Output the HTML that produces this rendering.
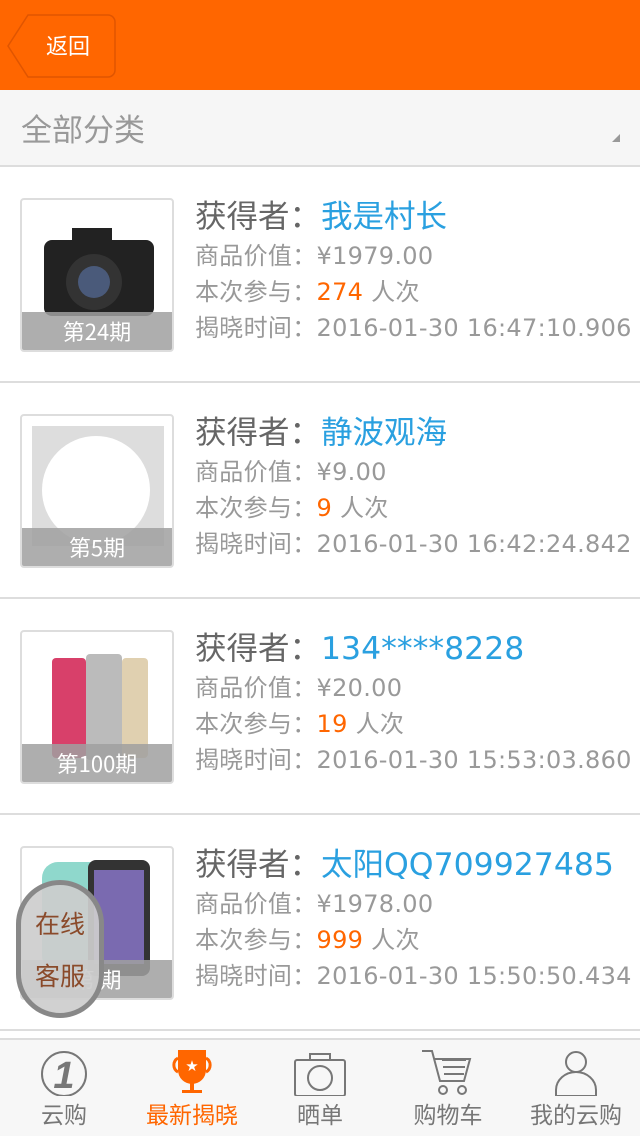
<!DOCTYPE html>
<html><head><meta charset="utf-8"><style>
*{margin:0;padding:0;box-sizing:border-box}
body{width:640px;height:1136px;overflow:hidden;background:#fff;font-family:"DejaVu Sans","Noto Sans CJK SC",sans-serif;position:relative}
.top{position:absolute;left:0;top:0;width:640px;height:90px;background:#ff6600}
.back{position:absolute;left:0;top:0;width:130px;height:90px}
.back span{position:absolute;left:46px;top:30px;color:#fff;font-size:22px;line-height:30px;font-family:"Noto Sans CJK SC",sans-serif}
.cat{position:absolute;top:90px;left:0;width:640px;height:77px;background:#f6f6f6;border-bottom:2px solid #ddd;color:#999;font-size:31px;line-height:76px;padding-left:21px;font-family:"Noto Sans CJK SC",sans-serif}
.cat i{position:absolute;right:20px;top:44px;width:0;height:0;border-left:8px solid transparent;border-bottom:8px solid #999}
.item{position:absolute;left:0;width:640px;height:216px;border-bottom:2px solid #ddd}
.pic{position:absolute;left:20px;top:31px;width:154px;height:154px;border:2px solid #ddd;border-radius:4px;overflow:hidden;background:#fff}
.per{position:absolute;left:0;bottom:0;width:100%;height:38px;background:rgba(160,160,160,.85);color:#fff;font-size:22px;text-align:center;line-height:38px;font-family:"Noto Sans CJK SC",sans-serif}
.t{position:absolute;left:195px;color:#999;font-size:24px;white-space:nowrap;line-height:30px;letter-spacing:0.3px}
.w{font-size:31.5px;color:#666;line-height:40px;letter-spacing:0}
.w b{font-weight:normal;color:#2aa0e0}
.o{color:#ff6600}
.nav{position:absolute;left:0;top:1038px;width:640px;height:98px;background:#f7f7f7;border-top:2px solid #ddd}
.n{position:absolute;top:0;width:128px;text-align:center;font-size:23px;color:#777;font-family:"Noto Sans CJK SC",sans-serif}
.n span{position:absolute;top:56px;left:0;width:100%}
.kf{position:absolute;left:16px;top:880px;width:88px;height:138px;border-radius:44px;background:rgba(205,205,205,.92);border:5px solid #888;color:#8a4a2a;font-size:25px;text-align:center;line-height:52px;padding-top:12px;font-family:"Noto Sans CJK SC",sans-serif}
</style></head><body>
<div class="top"><div class="back"><svg width="130" height="90"><path d="M28 15H108a7 7 0 0 1 7 7V70a7 7 0 0 1-7 7H28L8 46z" fill="#ff6600" stroke="#e05500" stroke-width="1.5"/></svg><span>返回</span></div></div>
<div class="cat">全部分类<i></i></div>

<div class="item" style="top:167px">
<div class="pic"><svg width="154" height="154"><rect x="22" y="40" width="110" height="76" rx="8" fill="#222"/><rect x="50" y="28" width="40" height="16" fill="#222"/><circle cx="72" cy="82" r="28" fill="#333"/><circle cx="72" cy="82" r="16" fill="#4a5a7a"/></svg><div class="per">第24期</div></div>
<div class="t w" style="top:30px">获得者：<b>我是村长</b></div>
<div class="t" style="top:74px">商品价值：¥1979.00</div>
<div class="t" style="top:110px">本次参与：<span class="o">274</span> 人次</div>
<div class="t" style="top:146px">揭晓时间：2016-01-30 16:47:10.906</div>
</div>

<div class="item" style="top:383px">
<div class="pic"><svg width="154" height="154"><rect x="10" y="10" width="132" height="120" fill="#ddd"/><circle cx="74" cy="74" r="54" fill="#fff"/></svg><div class="per">第5期</div></div>
<div class="t w" style="top:30px">获得者：<b>静波观海</b></div>
<div class="t" style="top:74px">商品价值：¥9.00</div>
<div class="t" style="top:110px">本次参与：<span class="o">9</span> 人次</div>
<div class="t" style="top:146px">揭晓时间：2016-01-30 16:42:24.842</div>
</div>

<div class="item" style="top:599px">
<div class="pic"><svg width="154" height="154"><rect x="30" y="26" width="34" height="100" rx="4" fill="#d8406a"/><rect x="64" y="22" width="36" height="106" rx="4" fill="#bbb"/><rect x="100" y="26" width="26" height="100" rx="4" fill="#e0d0b0"/></svg><div class="per">第100期</div></div>
<div class="t w" style="top:30px">获得者：<b>134****8228</b></div>
<div class="t" style="top:74px">商品价值：¥20.00</div>
<div class="t" style="top:110px">本次参与：<span class="o">19</span> 人次</div>
<div class="t" style="top:146px">揭晓时间：2016-01-30 15:53:03.860</div>
</div>

<div class="item" style="top:815px">
<div class="pic"><svg width="154" height="154"><rect x="20" y="14" width="70" height="110" rx="16" fill="#8fd8cc"/><rect x="66" y="12" width="62" height="116" rx="8" fill="#333"/><rect x="72" y="22" width="50" height="94" fill="#7a6ab0"/></svg><div class="per">第 期</div></div>
<div class="t w" style="top:30px">获得者：<b>太阳QQ709927485</b></div>
<div class="t" style="top:74px">商品价值：¥1978.00</div>
<div class="t" style="top:110px">本次参与：<span class="o">999</span> 人次</div>
<div class="t" style="top:146px">揭晓时间：2016-01-30 15:50:50.434</div>
</div>

<div class="kf">在线<br>客服</div>

<div class="nav">
<div class="n" style="left:0"><svg width="128" height="56"><circle cx="64" cy="34" r="22" fill="none" stroke="#777" stroke-width="2"/><text x="64" y="48" text-anchor="middle" font-size="38" font-style="italic" font-weight="bold" fill="#777" font-family="Liberation Sans">1</text></svg><span>云购</span></div>
<div class="n" style="left:128px;color:#ff6600"><svg width="128" height="56"><path d="M50 10h28v20a14 14 0 0 1-28 0z" fill="#ff6600"/><path d="M50 18a8 8 0 0 0 0 14M78 18a8 8 0 0 1 0 14" stroke="#ff6600" stroke-width="3" fill="none"/><rect x="62" y="42" width="4" height="8" fill="#ff6600"/><rect x="54" y="50" width="20" height="3" fill="#ff6600"/><text x="64" y="30" text-anchor="middle" font-size="12" fill="#fff">★</text></svg><span>最新揭晓</span></div>
<div class="n" style="left:256px"><svg width="128" height="56"><rect x="39" y="20" width="50" height="36" rx="2" fill="none" stroke="#777" stroke-width="2"/><rect x="54" y="14" width="20" height="6" fill="none" stroke="#777" stroke-width="2"/><circle cx="64" cy="38" r="12" fill="none" stroke="#777" stroke-width="2"/></svg><span>晒单</span></div>
<div class="n" style="left:384px"><svg width="128" height="56"><path d="M38 11h10l8 30h24l6-22H50M58 20h24M59 27h22M60 34h20" fill="none" stroke="#777" stroke-width="2"/><circle cx="59" cy="50" r="4" fill="none" stroke="#777" stroke-width="2"/><circle cx="78" cy="50" r="4" fill="none" stroke="#777" stroke-width="2"/></svg><span>购物车</span></div>
<div class="n" style="left:512px"><svg width="128" height="56"><circle cx="64" cy="22" r="10" fill="none" stroke="#777" stroke-width="2"/><path d="M44 56v-6a20 18 0 0 1 40 0v6z" fill="none" stroke="#777" stroke-width="2"/></svg><span>我的云购</span></div>
</div>
</body></html>
